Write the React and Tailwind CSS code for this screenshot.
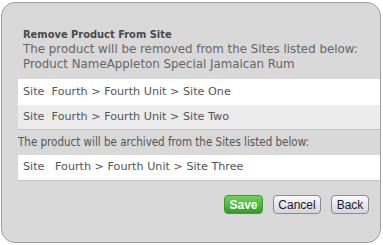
export default function App() {
  const verdana = { fontFamily: '"DejaVu Sans", Verdana, sans-serif' }
  const tahoma = { fontFamily: '"DejaVu Sans Condensed", "DejaVu Sans", sans-serif' }
  return (
    <div className="w-[383px] h-[245px] bg-white" style={verdana}>
      <div className="ml-[1px] mt-[2px] w-[380px] h-[241px] rounded-[14px] border border-[#9f9f9f] bg-[#d9d9d9] pl-4 pt-[24px]">
        <div className="pl-[5px] text-[11px] font-semibold text-[#4a4a4a] leading-[15px]" style={tahoma}>Remove Product From Site</div>
        <div className="pl-[5px] text-[11.85px] text-[#666] leading-[15px]">
          <div>The product will be removed from the Sites listed below:</div>
          <div>Product NameAppleton Special Jamaican Rum</div>
        </div>

        <div className="mt-[7px] text-[11.2px] text-[#555] border-b border-[#c4c4c4]">
          <div className="h-[26px] bg-white flex items-center pl-[5px]">Site&nbsp; Fourth &gt; Fourth Unit &gt; Site One</div>
          <div className="h-[24px] bg-[#ececec] flex items-center pl-[5px]">Site&nbsp; Fourth &gt; Fourth Unit &gt; Site Two</div>
        </div>

        <div className="mt-[5px] text-[11.5px] text-[#555] leading-[15px]" style={tahoma}>
          The product will be archived from the Sites listed below:
        </div>

        <div className="mt-[5px] h-[26px] bg-white flex items-center pl-[5px] text-[11.2px] text-[#555] border-b border-[#c4c4c4]">
          <span className="w-[32px]">Site</span>
          <span>Fourth &gt; Fourth Unit &gt; Site Three</span>
        </div>

        <div className="mt-[14px] flex justify-end gap-[10px] pr-[11px]" style={{ fontFamily: '"Liberation Sans", Arial, sans-serif' }}>
          <button className="h-[19px] w-[39px] rounded-[4px] border border-[#3f9a2e] bg-gradient-to-b from-[#6fd35a] to-[#2f9e22] text-white text-[12px] font-bold leading-none">Save</button>
          <button className="h-[19px] w-[48px] rounded-[4px] border border-[#8a8a8a] bg-gradient-to-b from-[#fbfbff] to-[#d4d4e2] text-[#222] text-[12px] leading-none">Cancel</button>
          <button className="h-[19px] w-[38px] rounded-[4px] border border-[#8a8a8a] bg-gradient-to-b from-[#fbfbff] to-[#d4d4e2] text-[#222] text-[12px] leading-none">Back</button>
        </div>
      </div>
    </div>
  )
}
